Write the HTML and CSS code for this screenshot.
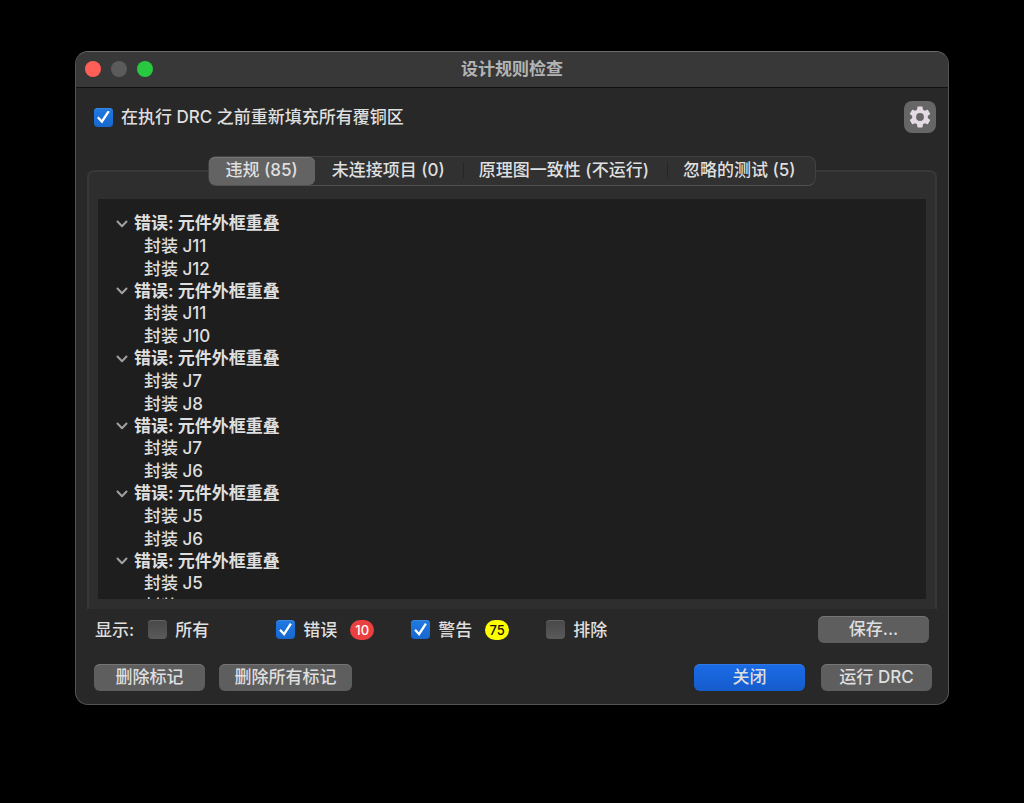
FILE: index.html
```html
<!DOCTYPE html>
<html lang="zh-CN">
<head>
<meta charset="utf-8">
<meta name="viewport" content="width=device-width, initial-scale=1">
<title>设计规则检查</title>
<link rel="stylesheet" href="styles.css">
</head>
<body>
<main class="window">
  <header class="titlebar">
    <div class="lights">
      <button class="light light-close" aria-label="关闭窗口"></button>
      <button class="light light-min" aria-label="最小化" disabled></button>
      <button class="light light-zoom" aria-label="缩放"></button>
    </div>
    <h1 class="title">设计规则检查</h1>
  </header>

  <div class="options">
    <label class="check"><input type="checkbox" class="box" checked>在执行 DRC 之前重新填充所有覆铜区</label>
    <button class="gear" aria-label="选项">
      <svg viewBox="0 0 24 24" width="26" height="26" aria-hidden="true"><path fill="#e3dae3" d="M19.14 12.94c.04-.3.06-.61.06-.94s-.02-.64-.07-.94l2.03-1.58a.49.49 0 0 0 .12-.61l-1.92-3.32a.488.488 0 0 0-.59-.22l-2.39.96c-.5-.38-1.03-.7-1.62-.94l-.36-2.54a.484.484 0 0 0-.48-.41h-3.84c-.24 0-.43.17-.47.41l-.36 2.54c-.59.24-1.13.57-1.62.94l-2.39-.96c-.22-.08-.47 0-.59.22L2.74 8.87c-.12.21-.08.47.12.61l2.03 1.58c-.05.3-.09.63-.09.94s.02.64.07.94l-2.03 1.58a.49.49 0 0 0-.12.61l1.92 3.32c.12.22.37.29.59.22l2.39-.96c.5.38 1.03.7 1.62.94l.36 2.54c.05.24.24.41.48.41h3.84c.24 0 .44-.17.47-.41l.36-2.54c.59-.24 1.13-.56 1.62-.94l2.39.96c.22.08.47 0 .59-.22l1.92-3.32c.12-.22.07-.47-.12-.61l-2.01-1.58zM12 15.6A3.6 3.6 0 1 1 12 8.4a3.6 3.6 0 0 1 0 7.2z"/></svg>
    </button>
  </div>

  <section class="notebook">
    <div class="tabs" role="tablist">
      <button class="tab tab-active" role="tab" aria-selected="true">违规 (85)</button>
      <button class="tab" role="tab" aria-selected="false">未连接项目 (0)</button>
      <button class="tab tab-split" role="tab" aria-selected="false">原理图一致性 (不运行)</button>
      <button class="tab tab-split" role="tab" aria-selected="false">忽略的测试 (5)</button>
    </div>
    <div class="panel">
      <div class="list">
        <details class="group" open><summary class="head"><svg class="chev" viewBox="0 0 12 8" aria-hidden="true"><path d="M1.5 1.5 6 6.2l4.500-4.700"/></svg>错误: 元件外框重叠</summary><p class="item">封装 J11</p><p class="item">封装 J12</p></details>
        <details class="group" open><summary class="head"><svg class="chev" viewBox="0 0 12 8" aria-hidden="true"><path d="M1.5 1.5 6 6.2l4.500-4.700"/></svg>错误: 元件外框重叠</summary><p class="item">封装 J11</p><p class="item">封装 J10</p></details>
        <details class="group" open><summary class="head"><svg class="chev" viewBox="0 0 12 8" aria-hidden="true"><path d="M1.5 1.5 6 6.2l4.500-4.700"/></svg>错误: 元件外框重叠</summary><p class="item">封装 J7</p><p class="item">封装 J8</p></details>
        <details class="group" open><summary class="head"><svg class="chev" viewBox="0 0 12 8" aria-hidden="true"><path d="M1.5 1.5 6 6.2l4.500-4.700"/></svg>错误: 元件外框重叠</summary><p class="item">封装 J7</p><p class="item">封装 J6</p></details>
        <details class="group" open><summary class="head"><svg class="chev" viewBox="0 0 12 8" aria-hidden="true"><path d="M1.5 1.5 6 6.2l4.500-4.700"/></svg>错误: 元件外框重叠</summary><p class="item">封装 J5</p><p class="item">封装 J6</p></details>
        <details class="group" open><summary class="head"><svg class="chev" viewBox="0 0 12 8" aria-hidden="true"><path d="M1.5 1.5 6 6.2l4.500-4.700"/></svg>错误: 元件外框重叠</summary><p class="item">封装 J5</p><p class="item">封装</p></details>
      </div>
    </div>
  </section>

  <div class="filters">
    <span class="caption">显示:</span>
    <label class="check filter-all"><input type="checkbox" class="box">所有</label>
    <div class="filter"><label class="check"><input type="checkbox" class="box" checked>错误</label><span class="badge badge-error">10</span></div>
    <div class="filter"><label class="check"><input type="checkbox" class="box" checked>警告</label><span class="badge badge-warn">75</span></div>
    <label class="check"><input type="checkbox" class="box">排除</label>
    <button class="btn btn-save">保存...</button>
  </div>

  <footer class="actions">
    <button class="btn">删除标记</button>
    <button class="btn btn-wide">删除所有标记</button>
    <button class="btn btn-primary">关闭</button>
    <button class="btn">运行 DRC</button>
  </footer>
</main>
</body>
</html>
```
FILE: styles.css
```css
* { box-sizing: border-box; }

body {
  margin: 0;
  padding: 51px 75px;
  background: #000;
  color: #dfdfdf;
  font: 500 17px/22px Inter, "Noto Sans CJK SC", sans-serif;
}

button {
  margin: 0;
  padding: 0;
  border: 0;
  font: inherit;
  color: inherit;
  white-space: nowrap;
}

.window {
  display: flex;
  flex-direction: column;
  min-width: 860px;
  background: #282828;
  border: 1px solid #545454;
  border-top-color: #6c6c6c;
  border-radius: 13px;
  overflow: hidden;
}

.titlebar {
  display: grid;
  grid-template-columns: 1fr auto 1fr;
  align-items: center;
  height: 36px;
  padding: 0 9px 2px;
  background: #383838;
  border-bottom: 1px solid #111;
}

.lights { display: flex; gap: 10px; }
.light { width: 16px; height: 16px; border-radius: 50%; }
.light-close { background: #ff5f57; }
.light-min { background: #5b5b5b; }
.light-zoom { background: #28c840; }
.title { margin: 0; font-size: 17px; font-weight: 600; line-height: 22px; color: #b3b3b3; }

.options {
  display: flex;
  justify-content: space-between;
  align-items: center;
  padding: 13px 12px 0 18px;
}

.check { display: flex; align-items: center; gap: 8px; white-space: nowrap; }

.box {
  appearance: none;
  display: grid;
  place-items: center;
  flex: none;
  width: 19px;
  height: 19px;
  margin: 0;
  border-radius: 4px;
  background: linear-gradient(#484848, #5a5a5a);
  box-shadow: inset 0 1px #636363;
}
.box:checked { background: linear-gradient(#2079e2, #1668cf); box-shadow: inset 0 1px #3a87e0; }
.box:checked::before {
  content: "";
  width: 13px;
  height: 13px;
  background: #fff;
  clip-path: polygon(0 57%, 13% 46%, 36% 72%, 83% 0, 98% 10%, 39% 100%);
}

.gear {
  display: grid;
  place-items: center;
  width: 32px;
  height: 32px;
  border-radius: 8px;
  background: #666;
}

.notebook { display: flex; flex-direction: column; padding: 23px 11px 0; }

.tabs {
  display: flex;
  align-self: center;
  z-index: 1;
  height: 30px;
  margin-bottom: -16px;
  padding-right: 3px;
  border: 1px solid #414141;
  border-bottom-color: #505050;
  border-radius: 8px;
  background: #313131;
}
.tab { display: flex; align-items: center; padding: 0 17px 2px; background: none; }
.tab-active { border-radius: 6px; background: #636363; box-shadow: inset 0 1px #747474; }
.tab-split::before { content: ""; width: 1px; height: 16px; margin: 0 15px 0 -16px; background: #262626; }

.panel {
  padding: 27px 9px 10px;
  background: #2e2e2e;
  border: 2px solid #383838;
  border-bottom: 0;
  border-radius: 7px 7px 0 0;
}

.list {
  height: 400px;
  padding: 13px 18px 0;
  background: #1e1e1e;
  overflow: auto;
  scrollbar-width: none;
}
.head {
  display: flex;
  align-items: center;
  gap: 6px;
  line-height: 23px;
  font-weight: 700;
  list-style: none;
}
.chev { width: 12px; height: 8px; fill: none; stroke: #a0a0a0; stroke-width: 2; stroke-linecap: round; stroke-linejoin: round; }
.group:not([open]) .chev { transform: rotate(-90deg); }
.item { margin: 0; padding-left: 28px; line-height: 23px; }
.item:last-child { line-height: 22px; }
.group:nth-child(even) .head { line-height: 22px; }

.filters { display: flex; align-items: center; padding: 7px 19px 0; }
.caption { margin-right: 14px; }
.filter-all { margin-right: 67px; }
.filter { display: flex; align-items: center; gap: 13px; margin-right: 37px; }
.badge {
  min-width: 24px;
  padding: 0 4px;
  border-radius: 10px;
  font-size: 13px;
  line-height: 20px;
  text-align: center;
}
.badge-error { background: #ec4040; color: #fff; }
.badge-warn { background: #ff0; color: #111; }

.btn {
  min-width: 111px;
  height: 27px;
  padding: 0 12px 2px;
  border-radius: 6px;
  background: #5e5e5e;
  box-shadow: inset 0 1px #757575;
  line-height: 24px;
}
.btn-save { margin-left: auto; }
.btn-wide { min-width: 133px; }
.btn-primary { margin-left: auto; background: linear-gradient(#1b6ce8, #155bcb); box-shadow: inset 0 1px #3279e8; }

.actions { display: flex; gap: 14px; padding: 21px 16px 13px 18px; }
.btn-primary + .btn { margin-left: 2px; }
```
